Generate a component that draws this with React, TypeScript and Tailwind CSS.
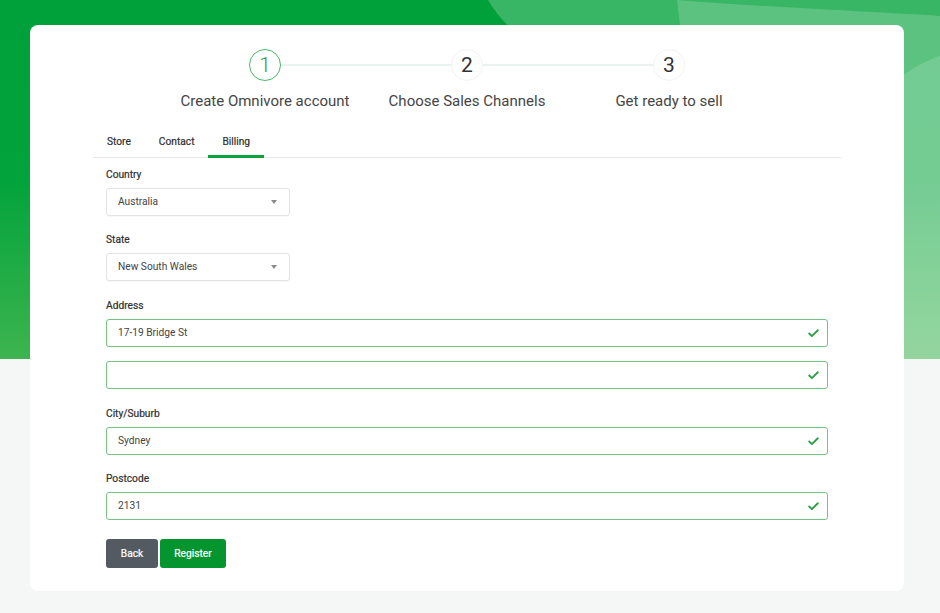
import React from 'react'
import { Check } from 'lucide-react'

const steps = [
  { n: '1', label: 'Create Omnivore account', active: true },
  { n: '2', label: 'Choose Sales Channels', active: false },
  { n: '3', label: 'Get ready to sell', active: false },
]

const tabs = ['Store', 'Contact', 'Billing']

const Backdrop: React.FC = () => (
  <svg
    className="absolute left-0 top-0 h-[359px] w-full"
    viewBox="0 0 940 359"
    preserveAspectRatio="none"
  >
    <defs>
      <linearGradient id="band" x1="0" y1="0" x2="0" y2="1">
        <stop offset="0" stopColor="#00a13a" />
        <stop offset="0.5" stopColor="#02a33c" />
        <stop offset="1" stopColor="#3db44f" />
      </linearGradient>
    </defs>
    <rect width="940" height="359" fill="url(#band)" />
    <path d="M488 0 C 505 30, 540 55, 600 85 L 940 420 L 940 0 Z" fill="#fff" fillOpacity="0.22" />
    <path d="M677 0 C 780 8, 880 12, 940 16 L 940 359 L 720 359 Z" fill="#fff" fillOpacity="0.18" />
    <path d="M904 75 C 915 66, 928 60, 940 56 L 940 359 L 904 359 Z" fill="#fff" fillOpacity="0.15" />
  </svg>
)

const Stepper: React.FC = () => (
  <div className="relative mx-auto grid w-[606px] grid-cols-3">
    <div className="absolute left-[101px] right-[101px] top-[15px] h-[2px] bg-[#ebf3f1]" />
    {steps.map(s => (
      <div key={s.n} className="relative flex flex-col items-center">
        <div
          className={`flex h-[32px] w-[32px] items-center justify-center rounded-full bg-white text-[21px] leading-none ${
            s.active ? 'border-[1.5px] border-[#4fb968] font-light text-[#2b9a3e]' : 'border border-[#f0f4f4] text-[#333]'
          }`}
        >
          {s.n}
        </div>
        <div className="mt-[11px] text-[15px] leading-[18px] text-[#454545]">{s.label}</div>
      </div>
    ))}
  </div>
)

// medium-ish weight: regular face with a hair of stroke
const semi = '[-webkit-text-stroke:0.2px_currentColor]'

const Label: React.FC<{ children: React.ReactNode }> = ({ children }) => (
  <div className={`mb-[6px] text-[10.2px] leading-[14px] text-[#2e2e2e] ${semi}`}>{children}</div>
)

const SelectBox: React.FC<{ value: string }> = ({ value }) => (
  <div className="flex h-[28px] w-[184px] items-center justify-between rounded-[3px] border border-[#e0e4e4] pl-[11px] pr-[12px] text-[10.2px] text-[#444] shadow-[0_1px_1px_rgba(0,0,0,0.03)]">
    <span>{value}</span>
    <span className="h-0 w-0 border-x-[3px] border-t-[4px] border-x-transparent border-t-[#8a8a8a]" />
  </div>
)

const ValidInput: React.FC<{ value?: string }> = ({ value }) => (
  <div className="flex h-[28px] w-full items-center justify-between rounded-[3px] border border-[#74c383] pl-[11px] pr-[7px] text-[10.2px] text-[#444]">
    <span>{value}</span>
    <Check className="h-[13px] w-[13px] text-[#2f9e45]" strokeWidth={3.4} />
  </div>
)

export default function App() {
  return (
    <div
      className="relative min-h-[613px] overflow-hidden bg-[#f5f7f7] pb-[22px] pt-[25px]"
      style={{ fontFamily: 'Roboto, "Liberation Sans", sans-serif' }}
    >
      <Backdrop />

      <div className="relative ml-[30px] w-[874px] rounded-lg bg-white pb-[23px] pt-[24px]">
        <Stepper />

        {/* Tabs */}
        <div className="mx-[63px] mt-[25px] flex border-b border-[#e6e8e8]">
          {tabs.map(t => (
            <div
              key={t}
              className={`-mb-px border-b-[3px] px-[14px] pb-[6px] text-[10.2px] leading-[14px] text-[#2e2e2e] ${semi} ${
                t === 'Billing' ? 'border-[#0aa33b]' : 'border-transparent'
              }`}
            >
              {t}
            </div>
          ))}
        </div>

        {/* Billing form */}
        <div className="mx-[76px] mt-[10px]">
          <Label>Country</Label>
          <SelectBox value="Australia" />

          <div className="mt-[17px]">
            <Label>State</Label>
            <SelectBox value="New South Wales" />
          </div>

          <div className="mt-[18px]">
            <Label>Address</Label>
            <ValidInput value="17-19 Bridge St" />
            <div className="mt-[14px]">
              <ValidInput />
            </div>
          </div>

          <div className="mt-[18px]">
            <Label>City/Suburb</Label>
            <ValidInput value="Sydney" />
          </div>

          <div className="mt-[17px]">
            <Label>Postcode</Label>
            <ValidInput value="2131" />
          </div>

          <div className="mt-[19px] flex gap-[2px]">
            <button className={`h-[29px] w-[52px] rounded-[3px] bg-[#545a61] text-[10.2px] text-white ${semi}`}>
              Back
            </button>
            <button className={`h-[29px] w-[66px] rounded-[3px] bg-[#04952f] text-[10.2px] text-white ${semi}`}>
              Register
            </button>
          </div>
        </div>
      </div>
    </div>
  )
}
